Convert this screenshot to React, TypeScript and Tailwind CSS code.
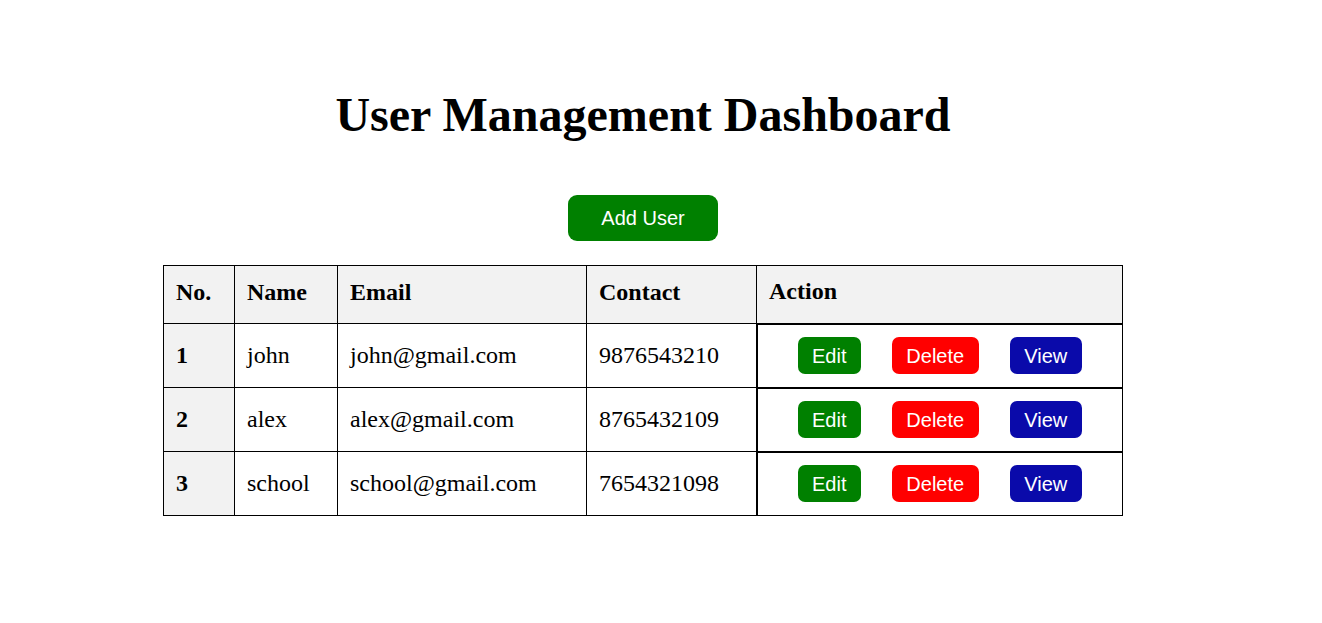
const users = [
  { id: 1, name: 'john', email: 'john@gmail.com', contact: '9876543210' },
  { id: 2, name: 'alex', email: 'alex@gmail.com', contact: '8765432109' },
  { id: 3, name: 'school', email: 'school@gmail.com', contact: '7654321098' },
];

export default function App() {
  return (
    <main className="min-h-screen w-full bg-white font-['Liberation_Serif',serif] text-black">
      <div className="flex w-[1286px] flex-col items-center">
        <h1 className="mt-[84px] text-[48px] leading-[62px] font-bold">User Management Dashboard</h1>
        <button className="mt-[49px] h-[46px] w-[150px] rounded-[9px] bg-[#008000] font-['Liberation_Sans',sans-serif] text-[20px] text-white">
          Add User
        </button>
        <table className="mt-[24px] w-[960px] border-collapse text-left text-[24px]">
          <thead>
            <tr className="h-[58px] bg-[#f2f2f2]">
              <th className="w-[71px] border border-black px-3 pb-[6px] font-bold">No.</th>
              <th className="w-[103px] border border-black px-3 pb-[6px] font-bold">Name</th>
              <th className="w-[249px] border border-black px-3 pb-[6px] font-bold">Email</th>
              <th className="w-[170px] border border-black px-3 pb-[6px] font-bold">Contact</th>
              <th className="border border-black px-3 pb-[6px] font-bold">Action</th>
            </tr>
          </thead>
          <tbody>
            {users.map((u) => (
              <tr key={u.id} className="h-[64px]">
                <th className="border border-black bg-[#f2f2f2] px-3 pb-[2px] font-bold">{u.id}</th>
                <td className="border border-black px-3 pb-[2px]">{u.name}</td>
                <td className="border border-black px-3 pb-[2px]">{u.email}</td>
                <td className="border border-black px-3 pb-[2px]">{u.contact}</td>
                <td className="border border-t-2 border-l-2 border-black px-3">
                  <div className="flex items-center justify-center gap-[31px] font-['Liberation_Sans',sans-serif] text-[20px] text-white">
                    <button className="h-[37px] w-[63px] rounded-[7px] bg-[#008000]">Edit</button>
                    <button className="h-[37px] w-[87px] rounded-[7px] bg-[#ff0000]">Delete</button>
                    <button className="h-[37px] w-[72px] rounded-[7px] bg-[#0a0aaa]">View</button>
                  </div>
                </td>
              </tr>
            ))}
          </tbody>
        </table>
      </div>
    </main>
  );
}
